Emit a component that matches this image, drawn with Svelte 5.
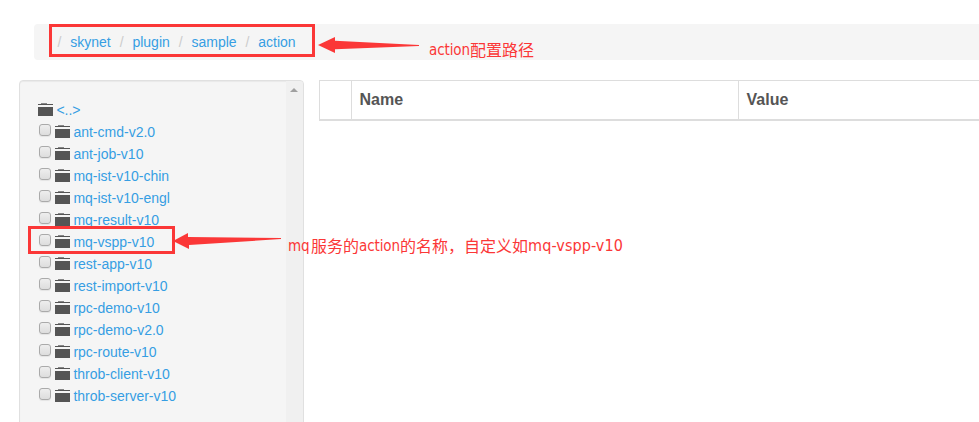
<script>
  const crumbs = ['skynet', 'plugin', 'sample', 'action'];
  const folders = [
    'ant-cmd-v2.0', 'ant-job-v10', 'mq-ist-v10-chin', 'mq-ist-v10-engl',
    'mq-result-v10', 'mq-vspp-v10', 'rest-app-v10', 'rest-import-v10',
    'rpc-demo-v10', 'rpc-demo-v2.0', 'rpc-route-v10', 'throb-client-v10',
    'throb-server-v10'
  ];
</script>

{#snippet folderIcon()}
  <svg class="folder" width="15" height="14" viewBox="0 0 15 14">
    <path d="M3 0H9V1H3Z" fill="#888" />
    <path d="M0 1H15V2H0Z" fill="#555" />
    <path d="M0 4H15V13H0Z" fill="#555" />
  </svg>
{/snippet}

<div class="page">
  <nav class="breadcrumb">
    {#each crumbs as crumb}
      <span class="crumb"><i>/</i><a href="#{crumb}">{crumb}</a></span>
    {/each}
  </nav>

  <div class="content">
    <aside class="tree">
      <div class="list">
        <div class="row">{@render folderIcon()}<a href="#up">&lt;..&gt;</a></div>
        {#each folders as name}
          <div class="row">
            <input type="checkbox" aria-label={name} />
            {@render folderIcon()}<a href="#{name}">{name}</a>
          </div>
        {/each}
      </div>
      <div class="scrollbar"><span class="up"></span></div>
    </aside>
    <div class="table">
      <div class="th pick"></div>
      <div class="th name">Name</div>
      <div class="th">Value</div>
    </div>
  </div>

  <div class="mark path-mark"></div>
  <div class="mark item-mark"></div>
  <svg class="arrows" width="979" height="422" viewBox="0 0 979 422">
    <path d="M318 45L335 37V40.8L419 45V46L335 49.2V53Z" />
    <path d="M173 241L188 233V237L281 238V239L189 245V249Z" />
  </svg>
  <div class="note path-note"><span class="latin">action</span>配置路径</div>
  <div class="note item-note"><span class="latin mq">mq</span>服务的<span class="latin">action</span>的名称，自定义如<span class="latin id">mq-vspp-v10</span></div>
</div>

<style>
  :global(body) { background: #fff; overflow: hidden; }
  .page {
    position: relative;
    box-sizing: border-box;
    height: 422px;
    padding-top: 24px;
    overflow: hidden;
    font: 14px/22px "Liberation Sans", Arial, sans-serif;
    color: #555;
  }
  a { color: #369ee3; text-decoration: none; }
  .breadcrumb {
    display: flex;
    align-items: center;
    box-sizing: border-box;
    height: 36px;
    margin-left: 34px;
    padding-left: 23.5px;
    background: #f5f5f5;
    border-radius: 4px 0 0 4px;
  }
  .crumb { display: flex; gap: 8.9px; margin-right: 8.9px; }
  .crumb i { font-style: normal; color: #ccc; }
  .content { display: flex; align-items: flex-start; margin: 20px 0 0 19px; }
  .tree {
    display: flex;
    box-sizing: border-box;
    width: 285px;
    height: 380px;
    background: #f5f5f5;
    border: 1px solid #e0e0e0;
    border-radius: 4px;
    box-shadow: inset 0 1px 1px rgba(0, 0, 0, .05);
  }
  .list { flex: 1; padding: 18px 0 0 18px; }
  .row { display: flex; align-items: center; height: 22px; white-space: nowrap; }
  input {
    appearance: none;
    box-sizing: border-box;
    width: 12px;
    height: 12px;
    margin: 0 4px 4px 1px;
    border: 1px solid #aaa;
    border-radius: 3px;
    background: linear-gradient(#eee, #ddd);
    box-shadow: 0 1px 1px rgba(0, 0, 0, .07);
  }
  .folder { margin: 0 3.4px 0 0; }
  .row a { line-height: 22px; }
  .scrollbar { width: 17px; background: #f0f0f0; border-radius: 0 3px 0 0; }
  .up {
    display: block;
    width: 0;
    margin: 7px 0 0 4px;
    border: 4px solid transparent;
    border-top: 0;
    border-bottom-color: #a0a0a0;
  }
  .table {
    display: flex;
    flex: 1;
    box-sizing: border-box;
    height: 41px;
    margin-left: 15px;
    border: solid #ddd;
    border-width: 1px 0 2px 1px;
    font-size: 16px;
    font-weight: bold;
    line-height: 38px;
  }
  .th { box-sizing: border-box; padding-left: 7.5px; }
  .pick { width: 32px; border-right: 1px solid #ddd; }
  .name { width: 387px; border-right: 1px solid #ddd; }
  .mark { position: absolute; box-sizing: border-box; border: 3px solid #fb3737; }
  .path-mark { left: 49px; top: 24px; width: 266px; height: 33px; }
  .item-mark { left: 28px; top: 226px; width: 147px; height: 28px; }
  .arrows { position: absolute; left: 0; top: 0; fill: #fb3737; pointer-events: none; }
  .note {
    position: absolute;
    display: flex;
    color: #fb3737;
    font: 16px/22px "Noto Sans CJK SC", sans-serif;
    white-space: nowrap;
  }
  .path-note { left: 429px; top: 38px; }
  .item-note { left: 288px; top: 234px; }
  .latin { width: 41px; padding-top: 1px; font: 15px/22px "DejaVu Sans Condensed", "DejaVu Sans", sans-serif; font-stretch: condensed; letter-spacing: -.1px; }
  .mq { width: 23px; }
  .id { width: 97px; font-size: 16px; letter-spacing: .1px; }
</style>
